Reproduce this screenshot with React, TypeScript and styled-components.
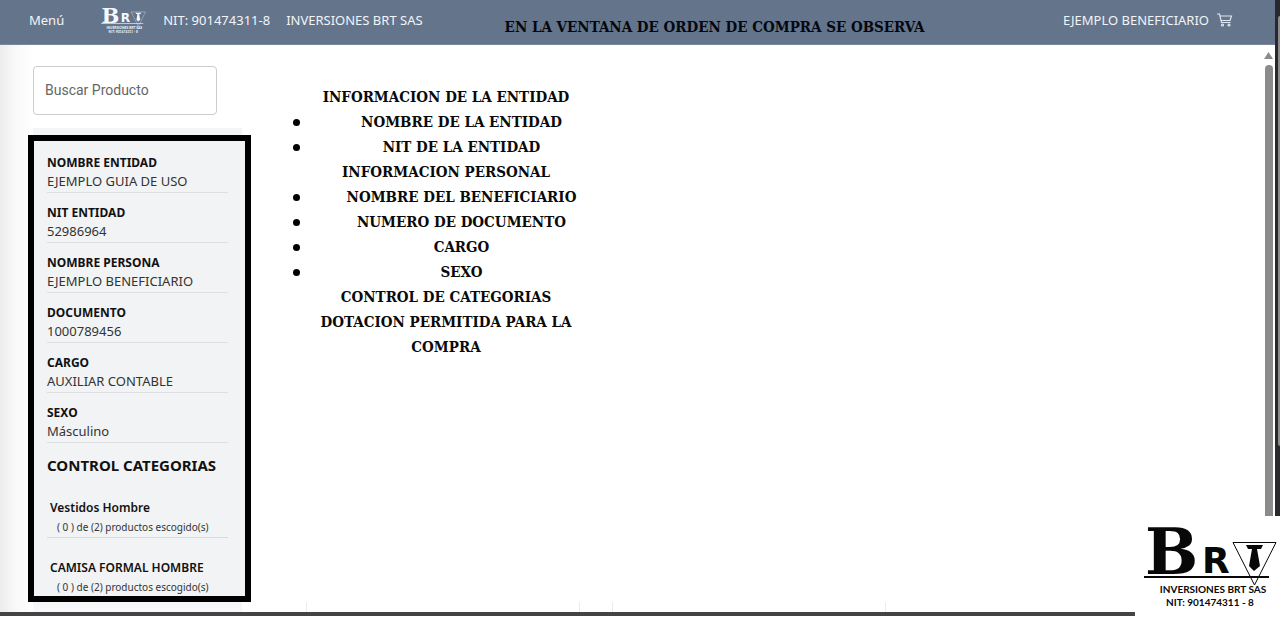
import React from "react";
import styled, { createGlobalStyle } from "styled-components";

const sans = `"Noto Sans", "Open Sans", sans-serif`;
const slab = `"DejaVu Serif Condensed", "DejaVu Serif", serif`;

const GlobalStyle = createGlobalStyle`
  *, *::before, *::after { box-sizing: border-box; }
  body { margin: 0; background: #fff; color: #111; font-family: ${sans}; }
  h1, h2, h3, p, ul, dl, dt, dd { margin: 0; padding: 0; }
`;

const Shell = styled.div`
  display: flex;
  min-height: calc(100vh - 1px);
  border-bottom: 4px solid #444346;
`;
const Page = styled.div`
  flex: 1;
  min-width: 0;
  display: flex;
  flex-direction: column;
`;
const OuterRail = styled.div`
  width: 5px;
  background: #29292d;
  padding: 16px 0 166px 3px;
  display: flex;
`;
const OuterThumb = styled.div`
  flex: 1;
  background: #8d8d8f;
  border-radius: 2px 0 0 2px;
`;
const Header = styled.header`
  display: flex;
  height: 45px;
  padding: 0 42px 0 29px;
  background: #64748b;
  border-bottom: 1px solid #79869a;
`;
const Nav = styled.nav`
  display: flex;
  align-items: center;
  height: 40px;
  color: #f1f5f9;
  font-size: 13px;
  line-height: 20px;
  white-space: nowrap;
`;
const MenuButton = styled.button`
  border: 0;
  padding: 0;
  margin-right: 34px;
  background: none;
  color: inherit;
  font: inherit;
`;
const BrandText = styled.span`
  margin-left: 16px;
`;
const Title = styled.h1`
  margin-left: 82px;
  font: bold 15px/54px ${slab};
  color: #05070f;
  white-space: nowrap;
`;
const Account = styled(Nav)`
  margin-left: auto;
  gap: 8px;
`;
const CartLink = styled.a`
  display: flex;
  color: #dbe7f5;
`;
const Body = styled.div`
  flex: 1;
  display: flex;
  background: linear-gradient(to right, #ececec, #f9f9f9 16px, #fff 33px);
`;
const Sidebar = styled.aside`
  width: 209px;
  margin-left: 33px;
  padding-top: 21px;
  display: flex;
  flex-direction: column;
`;
const Search = styled.input`
  width: 184px;
  height: 49px;
  padding: 0 11px 2px;
  border: 1px solid #ccc;
  border-radius: 4px;
  background: #fff;
  font: 14px/20px Roboto, sans-serif;
  &::placeholder { color: #666; opacity: 1; }
`;
const Card = styled.section`
  flex: 1;
  margin-top: 13px;
  padding: 7px 0 10px;
  background: linear-gradient(#f3f5f6 470px, #f8f9fa);
`;
const Frame = styled.div`
  margin: 0 -9px 0 -5px;
  padding: 12px 17px 0 13px;
  border: 6px solid #000;
  background: #f1f3f5;
`;
const Field = styled.div`
  margin-bottom: 10px;
  padding-bottom: 1px;
  border-bottom: 1px solid #dddfe2;
`;
const Label = styled.dt`
  font-size: 12px;
  line-height: 19px;
  font-weight: 700;
`;
const Value = styled.dd`
  font-size: 13px;
  line-height: 19px;
  color: #333;
  white-space: nowrap;
`;
const ControlTitle = styled.h2`
  font-size: 15px;
  line-height: 25px;
  white-space: nowrap;
`;
const Category = styled.div`
  padding: 20px 3px 1px;
  border-bottom: 1px solid #d8dadd;
  &:last-child { border: 0; padding-bottom: 0; }
`;
const CategoryName = styled.h3`
  font-size: 12px;
  line-height: 20px;
  font-weight: 600;
  white-space: nowrap;
`;
const CategoryCount = styled.p`
  padding-left: 7px;
  font-size: 10px;
  line-height: 18px;
  color: #333;
  white-space: nowrap;
`;
const Content = styled.main`
  flex: 1;
  min-width: 0;
  display: flex;
  flex-direction: column;
  justify-content: space-between;
  padding: 40px 0 0 51px;
`;
const Notes = styled.div`
  width: 306px;
  font: bold 15px/25px ${slab};
  color: #0a0a0a;
  text-align: center;
`;
const NoteItem = styled.li`
  display: flex;
  align-items: center;
  gap: 24px;
  &::before {
    content: "";
    width: 7px;
    height: 7px;
    border-radius: 50%;
    background: #000;
  }
  span { flex: 1; }
`;
const NoteList = styled.ul`
  list-style: none;
`;
const Products = styled.div`
  display: flex;
  gap: 32px;
  padding-left: 13px;
`;
const ProductEdge = styled.div`
  width: 274px;
  height: 10px;
  border: solid #ececec;
  border-width: 0 1px;
`;
const ScrollRail = styled.div`
  width: 13px;
  padding: 7px 2px 0;
  display: flex;
  flex-direction: column;
  align-items: center;
  gap: 6px;
`;
const ScrollThumb = styled.div`
  flex: 1;
  width: 8px;
  border-radius: 4px;
  background: #8b8b8b;
`;
const Stamp = styled.footer`
  position: fixed;
  right: 0;
  bottom: 0;
  width: 145px;
  height: 101px;
  background: #fff;
  svg { display: block; }
`;

function Logo({ width, height, color }: { width: number; height: number; color: string }) {
  return (
    <svg width={width} height={height} viewBox="0 0 145 101" role="img" aria-label="Inversiones BRT SAS" fill={color}>
      <text x="10" y="58" fontFamily="DejaVu Serif" fontWeight="700" fontSize="63">B</text>
      <text x="67" y="57" fontFamily="DejaVu Sans" fontWeight="700" fontSize="36">R</text>
      <path d="M9 61H134" stroke={color} strokeWidth="2" />
      <path d="M98 26.500H141L119.500 69Z" fill="none" stroke={color} strokeWidth="1" />
      <path d="M111 29h17l-2 4h-4l3 17-6 5-5-5 3-17h-4z" />
      <text x="78" y="77" textAnchor="middle" fontFamily="Lato" fontWeight="700" fontSize="10">INVERSIONES BRT SAS</text>
      <text x="75" y="90" textAnchor="middle" fontFamily="Lato" fontWeight="700" fontSize="10">NIT: 901474311 - 8</text>
    </svg>
  );
}

const fields = [
  ["NOMBRE ENTIDAD", "EJEMPLO GUIA DE USO"],
  ["NIT ENTIDAD", "52986964"],
  ["NOMBRE PERSONA", "EJEMPLO BENEFICIARIO"],
  ["DOCUMENTO", "1000789456"],
  ["CARGO", "AUXILIAR CONTABLE"],
  ["SEXO", "Másculino"],
];
const categories = ["Vestidos Hombre", "CAMISA FORMAL HOMBRE"];

function Bullets({ items }: { items: string[] }) {
  return (
    <NoteList>
      {items.map((item) => (
        <NoteItem key={item}><span>{item}</span></NoteItem>
      ))}
    </NoteList>
  );
}

export default function App() {
  return (
    <>
      <GlobalStyle />
      <Shell>
        <Page>
          <Header>
            <Nav>
              <MenuButton type="button">Menú</MenuButton>
              <Logo width={49} height={34} color="#f4f8fc" />
              <BrandText>NIT: 901474311-8</BrandText>
              <BrandText>INVERSIONES BRT SAS</BrandText>
            </Nav>
            <Title>EN LA VENTANA DE ORDEN DE COMPRA SE OBSERVA</Title>
            <Account>
              <span>EJEMPLO BENEFICIARIO</span>
              <CartLink href="#carrito" aria-label="Carrito">
                <svg width="16" height="16" viewBox="0 0 16 16" fill="none" stroke="currentColor" strokeWidth="1.200">
                  <path d="M0 2h2.500l2 8.500h9M3 4h11.500l-1.500 4.500H4" />
                  <circle cx="5.500" cy="13" r="1" />
                  <circle cx="12" cy="13" r="1" />
                </svg>
              </CartLink>
            </Account>
          </Header>
          <Body>
            <Sidebar>
              <Search type="search" placeholder="Buscar Producto" aria-label="Buscar Producto" />
              <Card>
                <Frame>
                  <dl>
                    {fields.map(([label, value]) => (
                      <Field key={label}>
                        <Label>{label}</Label>
                        <Value>{value}</Value>
                      </Field>
                    ))}
                  </dl>
                  <ControlTitle>CONTROL CATEGORIAS</ControlTitle>
                  {categories.map((name) => (
                    <Category key={name}>
                      <CategoryName>{name}</CategoryName>
                      <CategoryCount>( 0 ) de (2) productos escogido(s)</CategoryCount>
                    </Category>
                  ))}
                </Frame>
              </Card>
            </Sidebar>
            <Content>
              <Notes>
                <p>INFORMACION DE LA ENTIDAD</p>
                <Bullets items={["NOMBRE DE LA ENTIDAD", "NIT DE LA ENTIDAD"]} />
                <p>INFORMACION PERSONAL</p>
                <Bullets items={["NOMBRE DEL BENEFICIARIO", "NUMERO DE DOCUMENTO", "CARGO", "SEXO"]} />
                <p>CONTROL DE CATEGORIAS</p>
                <p>DOTACION PERMITIDA PARA LA COMPRA</p>
              </Notes>
              <Products>
                <ProductEdge />
                <ProductEdge />
              </Products>
            </Content>
            <ScrollRail>
              <svg width="9" height="7" viewBox="0 0 9 7"><path d="M4.500 0 9 7H0Z" fill="#8b8b8b" /></svg>
              <ScrollThumb />
            </ScrollRail>
          </Body>
        </Page>
        <OuterRail><OuterThumb /></OuterRail>
      </Shell>
      <Stamp><Logo width={145} height={101} color="#080808" /></Stamp>
    </>
  );
}
